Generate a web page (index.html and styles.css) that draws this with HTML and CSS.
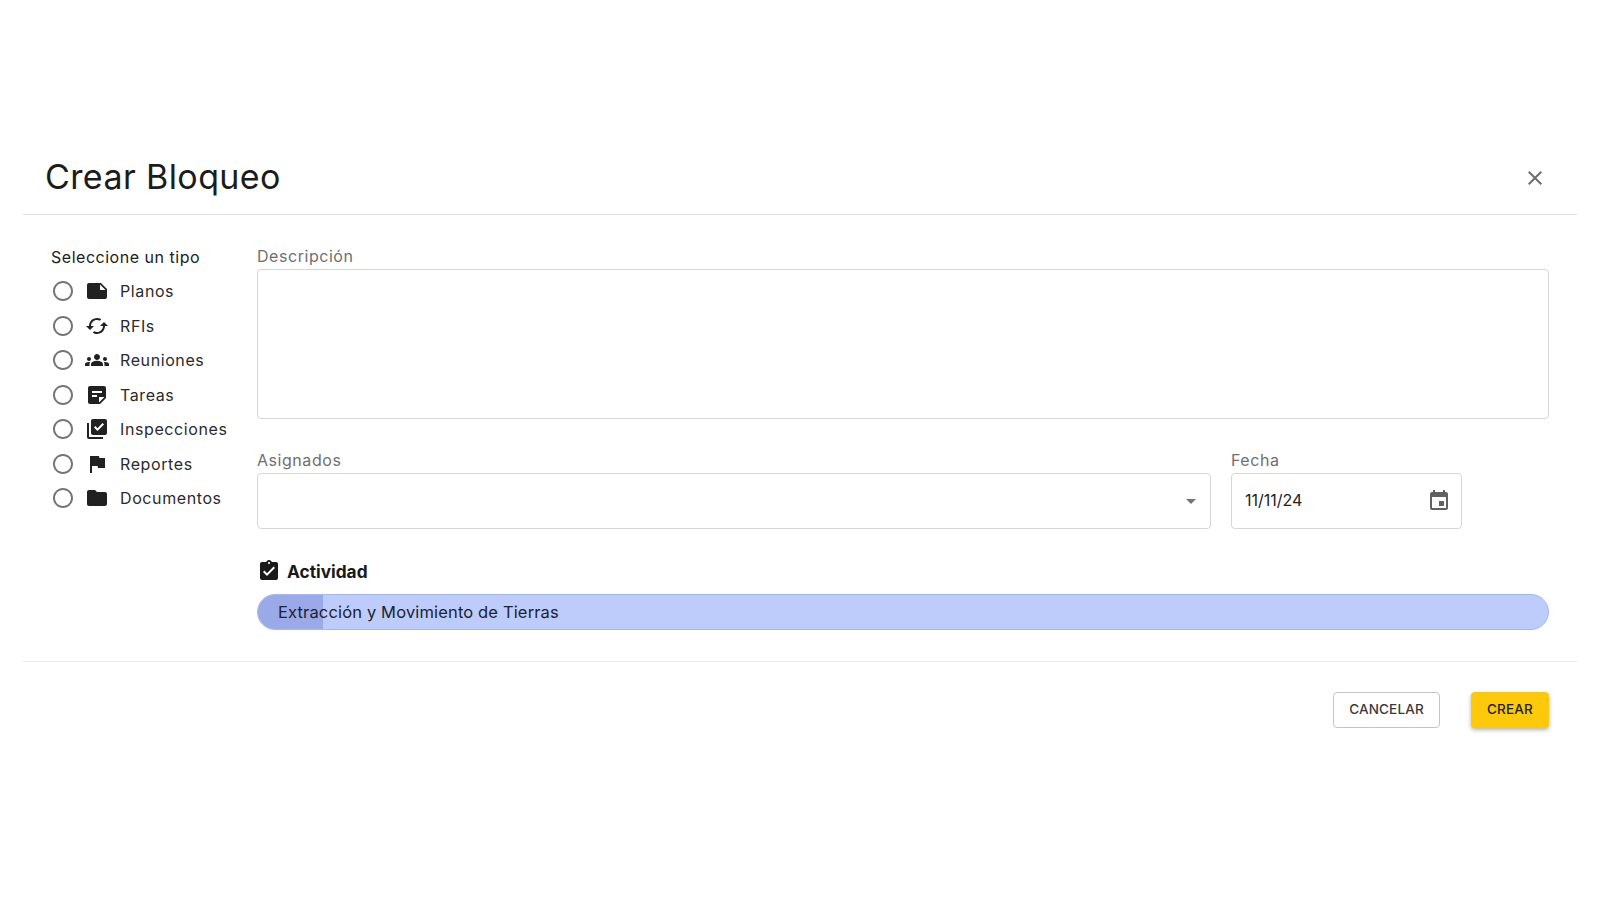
FILE: index.html
```html
<!DOCTYPE html>
<html lang="es">
<head>
<meta charset="utf-8">
<title>Crear Bloqueo</title>
<link rel="stylesheet" href="styles.css">
</head>
<body>
<main class="dialog">
  <header class="dialog-header">
    <h1 class="dialog-title">Crear Bloqueo</h1>
    <svg class="close-icon" viewBox="0 0 24 24"><path d="M19 6.41 17.59 5 12 10.59 6.41 5 5 6.41 10.59 12 5 17.59 6.41 19 12 13.41 17.59 19 19 17.59 13.41 12z"/></svg>
  </header>
  <section class="dialog-body">
    <aside class="types">
      <div class="types-title">Seleccione un tipo</div>
      <ul class="type-list">
        <li class="type-row">
          <svg class="radio" viewBox="0 0 24 24"><path d="M12 2C6.48 2 2 6.48 2 12s4.48 10 10 10 10-4.48 10-10S17.52 2 12 2zm0 18c-4.42 0-8-3.58-8-8s3.58-8 8-8 8 3.58 8 8-3.58 8-8 8z"/></svg>
          <svg class="type-icon" viewBox="0 0 24 24"><path d="M22 10l-6-6H4c-1.1 0-2 .9-2 2v12.01c0 1.1.9 1.99 2 1.99l16-.01c1.1 0 2-.89 2-1.99v-8zm-7-4.5 5.5 5.5H15V5.5z"/></svg>
          <span>Planos</span>
        </li>
        <li class="type-row">
          <svg class="radio" viewBox="0 0 24 24"><path d="M12 2C6.48 2 2 6.48 2 12s4.48 10 10 10 10-4.48 10-10S17.52 2 12 2zm0 18c-4.42 0-8-3.58-8-8s3.58-8 8-8 8 3.58 8 8-3.58 8-8 8z"/></svg>
          <svg class="type-icon" viewBox="0 0 24 24"><path d="M19 8l-4 4h3c0 3.31-2.69 6-6 6-1.01 0-1.97-.25-2.8-.7l-1.46 1.46C8.97 19.54 10.43 20 12 20c4.42 0 8-3.58 8-8h3l-4-4zM6 12c0-3.31 2.69-6 6-6 1.01 0 1.97.25 2.8.7l1.46-1.46C15.03 4.46 13.57 4 12 4c-4.42 0-8 3.58-8 8H1l4 4 4-4H6z"/></svg>
          <span>RFIs</span>
        </li>
        <li class="type-row">
          <svg class="radio" viewBox="0 0 24 24"><path d="M12 2C6.48 2 2 6.48 2 12s4.48 10 10 10 10-4.48 10-10S17.52 2 12 2zm0 18c-4.42 0-8-3.58-8-8s3.58-8 8-8 8 3.58 8 8-3.58 8-8 8z"/></svg>
          <svg class="type-icon" viewBox="0 0 24 24"><path d="M12 12.75c1.63 0 3.07.39 4.24.9 1.08.48 1.76 1.56 1.76 2.73V18H6v-1.61c0-1.18.68-2.26 1.76-2.73 1.17-.52 2.61-.91 4.24-.91zM4 13c1.1 0 2-.9 2-2s-.9-2-2-2-2 .9-2 2 .9 2 2 2zm1.13 1.1c-.37-.06-.74-.1-1.13-.1-.99 0-1.93.21-2.78.58C.48 14.9 0 15.62 0 16.43V18h4.5v-1.61c0-.83.23-1.61.63-2.29zM20 13c1.1 0 2-.9 2-2s-.9-2-2-2-2 .9-2 2 .9 2 2 2zm4 3.43c0-.81-.48-1.53-1.22-1.85-.85-.37-1.79-.58-2.78-.58-.39 0-.76.04-1.13.1.4.68.63 1.46.63 2.29V18H24v-1.57zM12 6c1.66 0 3 1.34 3 3s-1.34 3-3 3-3-1.34-3-3 1.34-3 3-3z"/></svg>
          <span>Reuniones</span>
        </li>
        <li class="type-row">
          <svg class="radio" viewBox="0 0 24 24"><path d="M12 2C6.48 2 2 6.48 2 12s4.48 10 10 10 10-4.48 10-10S17.52 2 12 2zm0 18c-4.42 0-8-3.58-8-8s3.58-8 8-8 8 3.58 8 8-3.58 8-8 8z"/></svg>
          <svg class="type-icon" viewBox="0 0 24 24"><path d="M19 3H4.99C3.89 3 3 3.9 3 5l.01 14c0 1.1.89 2 1.99 2h10l6-6V5c0-1.1-.9-2-2-2zM7 8h10v2H7V8zm5 6H7v-2h5v2zm2 5.5V14h5.5L14 19.5z"/></svg>
          <span>Tareas</span>
        </li>
        <li class="type-row">
          <svg class="radio" viewBox="0 0 24 24"><path d="M12 2C6.48 2 2 6.48 2 12s4.48 10 10 10 10-4.48 10-10S17.52 2 12 2zm0 18c-4.42 0-8-3.58-8-8s3.58-8 8-8 8 3.58 8 8-3.58 8-8 8z"/></svg>
          <svg class="type-icon" viewBox="0 0 24 24"><path d="M20 2H8c-1.1 0-2 .9-2 2v12c0 1.1.9 2 2 2h12c1.1 0 2-.9 2-2V4c0-1.1-.9-2-2-2zm-7.53 12L9 10.5l1.4-1.41 2.07 2.08L17.6 6 19 7.41 12.47 14zM4 20h14v2H4c-1.1 0-2-.9-2-2V6h2v14z"/></svg>
          <span>Inspecciones</span>
        </li>
        <li class="type-row">
          <svg class="radio" viewBox="0 0 24 24"><path d="M12 2C6.48 2 2 6.48 2 12s4.48 10 10 10 10-4.48 10-10S17.52 2 12 2zm0 18c-4.42 0-8-3.58-8-8s3.58-8 8-8 8 3.58 8 8-3.58 8-8 8z"/></svg>
          <svg class="type-icon" viewBox="0 0 24 24"><path d="M14.4 6L14 4H5v17h2v-7h5.6l.4 2h7V6z"/></svg>
          <span>Reportes</span>
        </li>
        <li class="type-row">
          <svg class="radio" viewBox="0 0 24 24"><path d="M12 2C6.48 2 2 6.48 2 12s4.48 10 10 10 10-4.48 10-10S17.52 2 12 2zm0 18c-4.42 0-8-3.58-8-8s3.58-8 8-8 8 3.58 8 8-3.58 8-8 8z"/></svg>
          <svg class="type-icon" viewBox="0 0 24 24"><path d="M10 4H4c-1.1 0-1.99.9-1.99 2L2 18c0 1.1.9 2 2 2h16c1.1 0 2-.9 2-2V8c0-1.1-.9-2-2-2h-8l-2-2z"/></svg>
          <span>Documentos</span>
        </li>
      </ul>
    </aside>
    <div class="form">
      <div class="field-label">Descripción</div>
      <div class="box box-desc"></div>
      <div class="form-row">
        <div class="field field-assign">
          <div class="field-label">Asignados</div>
          <div class="box box-input box-select">
            <span class="caret"></span>
          </div>
        </div>
        <div class="field field-date">
          <div class="field-label">Fecha</div>
          <div class="box box-input">
            <span class="date-value">11/11/24</span>
            <svg class="date-icon" viewBox="0 0 24 24"><path d="M17 12h-5v5h5v-5zM16 1v2H8V1H6v2H5c-1.11 0-1.99.9-1.99 2L3 19c0 1.1.89 2 2 2h14c1.1 0 2-.9 2-2V5c0-1.1-.9-2-2-2h-1V1h-2zm3 18H5V8h14v11z"/></svg>
          </div>
        </div>
      </div>
      <div class="activity-head">
        <svg class="activity-icon" viewBox="0 0 24 24"><path d="M19 3h-4.18C14.4 1.84 13.3 1 12 1c-1.3 0-2.4.84-2.82 2H5c-1.1 0-2 .9-2 2v14c0 1.1.9 2 2 2h14c1.1 0 2-.9 2-2V5c0-1.1-.9-2-2-2zm-7 0c.55 0 1 .45 1 1s-.45 1-1 1-1-.45-1-1 .45-1 1-1zm-2 14l-4-4 1.41-1.41L10 14.17l6.59-6.59L18 9l-8 8z"/></svg>
        <span>Actividad</span>
      </div>
      <div class="progress">
        <div class="progress-fill" style="width:5%"></div>
        <span class="progress-text">Extracción y Movimiento de Tierras</span>
      </div>
    </div>
  </section>
  <footer class="dialog-footer">
    <button class="btn btn-outline">CANCELAR</button>
    <button class="btn btn-primary">CREAR</button>
  </footer>
</main>
</body>
</html>
```
FILE: styles.css
```css
* { box-sizing: border-box; }
html, body { margin: 0; padding: 0; background: #fff; }
body {
  font-family: Inter, "Noto Sans", "Liberation Sans", sans-serif;
  color: #212121;
  height: 900px;
  overflow: hidden;
  padding-top: 147px;
}
.dialog { margin: 0 23px; }
.dialog-header {
  height: 68px;
  border-bottom: 1px solid #e4e4e4;
  display: flex;
  align-items: center;
  justify-content: space-between;
  padding: 0 30px 8px 22px;
}
.dialog-title { margin: 0; font-size: 34px; font-weight: 400; line-height: 46px; letter-spacing: .4px; color: #1c1c1c; }
.close-icon { width: 24px; height: 24px; fill: #6e6e6e; margin-top: 2px; }
.dialog-body {
  display: flex;
  height: 447px;
  border-bottom: 1px solid #ececec;
  padding: 29px 28px 0 28px;
}
.types { width: 206px; flex: none; padding-top: 1px; }
.types-title { font-size: 16px; line-height: 24px; margin-bottom: 5px; letter-spacing: .52px; }
.type-list { list-style: none; margin: 0; padding: 0; }
.type-row {
  display: flex;
  align-items: center;
  height: 34.5px;
  font-size: 16px;
  letter-spacing: .6px;
  color: #2b2b2b;
}
.radio { width: 24px; height: 24px; fill: #757575; flex: none; }
.type-icon { width: 24px; height: 24px; fill: #212121; flex: none; margin: 0 11px 0 10px; }
.form { flex: 1; min-width: 0; }
.field-label { font-size: 16px; line-height: 24px; color: #6f6f6f; letter-spacing: .55px; height: 24px; }
.box { border: 1px solid #d6d6d6; border-radius: 4px; background: #fff; }
.box-desc { height: 150px; margin-top: 1px; margin-bottom: 29px; }
.form-row { display: flex; gap: 20px; }
.field-assign { width: 954px; }
.field-date { width: 231px; }
.box-input { height: 56px; margin-top: 1px; display: flex; align-items: center; padding: 0 10px 0 13px; }
.box-select { justify-content: flex-end; padding-right: 14px; }
.caret { width: 0; height: 0; border-left: 5.5px solid transparent; border-right: 5.5px solid transparent; border-top: 5.5px solid #757575; }
.date-value { flex: 1; font-size: 16px; color: #222; margin-bottom: 2px; }
.date-icon { width: 24px; height: 24px; fill: #616161; }
.activity-head { display: flex; align-items: center; gap: 6px; margin-top: 30px; height: 24px; font-size: 17.3px; font-weight: 700; color: #1a1a1a; }
.activity-icon { width: 24px; height: 24px; fill: #1a1a1a; }
.progress { position: relative; height: 36px; margin-top: 11px; border: 1px solid #a6b7f6; border-radius: 18px; background: #bdccfb; overflow: hidden; display: flex; align-items: center; padding-left: 20px; }
.progress-fill { position: absolute; left: 0; top: 0; bottom: 0; background: #9aaae8; }
.progress-text { position: relative; font-size: 16.5px; letter-spacing: .15px; color: #20222e; margin-bottom: 1px; }
.dialog-footer { display: flex; justify-content: flex-end; gap: 31px; padding: 30px 28px 0 0; }
.btn { height: 36px; border-radius: 4px; font: 500 13.5px/1 Inter, sans-serif; letter-spacing: .15px; cursor: pointer; }
.btn-outline { width: 107px; background: #fff; border: 1px solid #c4c4c4; color: #3a3a3a; }
.btn-primary { width: 78px; background: #fdc90a; border: 0; color: #1e1e1e; box-shadow: 0 2px 4px rgba(0,0,0,.3); }
```
